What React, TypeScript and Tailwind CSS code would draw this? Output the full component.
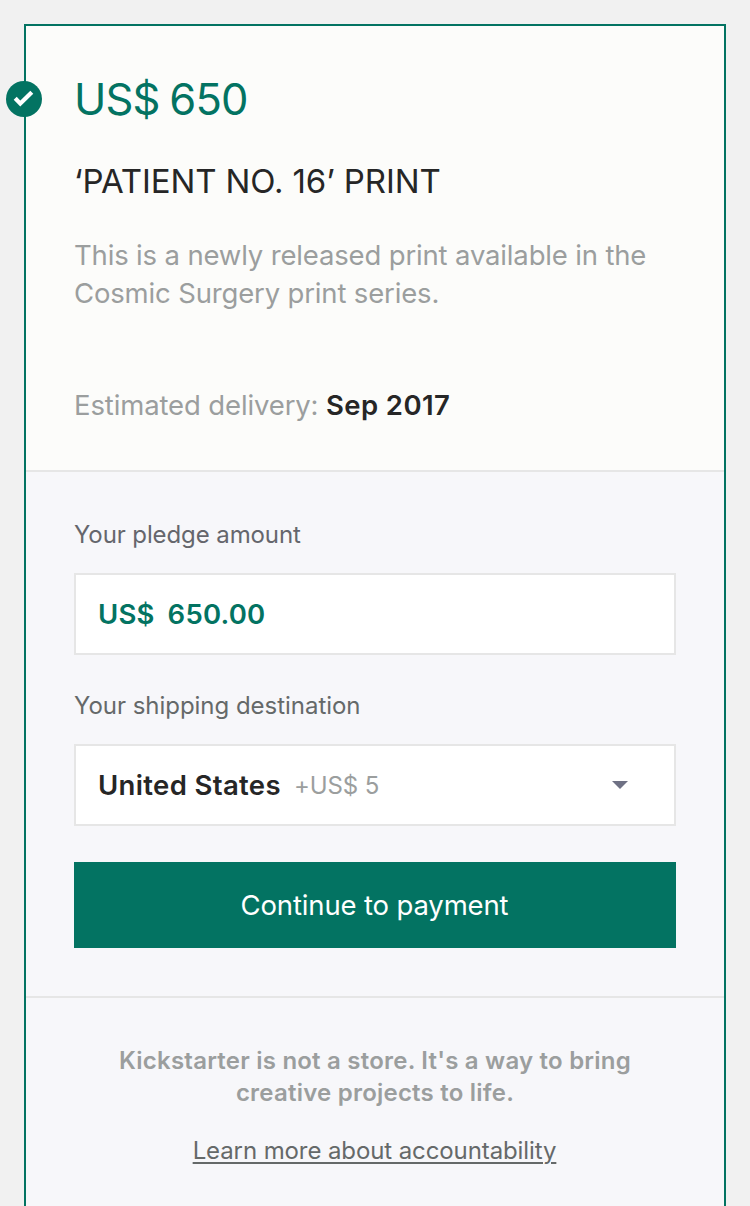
import React from "react";

const fontClass = "font-['Inter','Liberation_Sans',sans-serif]";

function Check() {
  return (
    <span className="absolute left-[-20px] top-[55px] flex h-9 w-9 items-center justify-center rounded-full bg-[#037362]">
      <svg width="36" height="36" viewBox="0 0 36 36" fill="none">
        <path d="M9.2 17.2L14.3 22.6L25.8 11.2" stroke="#fff" strokeWidth="4.2" />
      </svg>
    </span>
  );
}

export default function App() {
  return (
    <div className={`${fontClass} h-[1206px] w-[750px] overflow-hidden bg-[#f1f1f1] px-6 pt-6`}>
      <main className="relative h-[1300px] border-2 border-[#037362] bg-[#f7f7fa]">
        <Check />
        <section className="h-[446px] border-b-2 border-[#e6e6e6] bg-[#fcfcfa] px-12 pt-[45px] whitespace-nowrap">
          <h1 className="h-14 text-[43.5px] leading-[56px] tracking-[-0.9px] [word-spacing:-1.5px] text-[#037362]">US$ 650</h1>
          <h2 className="mt-[34px] h-10 text-[33px] leading-10 tracking-[-0.12px] text-[#262626]">‘PATIENT NO. 16’ PRINT</h2>
          <p className="mt-[35px] text-[27.5px] leading-[38px] tracking-[-0.16px] text-[#9b9e9e]">
            This is a newly released print available in the<br />Cosmic Surgery print series.
          </p>
          <p className="mt-[74px] text-[27.5px] leading-[38px] tracking-[-0.13px] text-[#9b9e9e]">
            Estimated delivery: <b className="font-semibold tracking-[0.4px] text-[#262626]">Sep 2017</b>
          </p>
        </section>
        <section className="h-[526px] border-b-2 border-[#e6e6e6] px-12 pt-[47px] whitespace-nowrap">
          <label className="block h-8 text-[24px] leading-8 tracking-[-0.1px] text-[#65666c]"><span>Your pledge amount</span></label>
          <div className="mt-[22px] flex h-[82px] items-center gap-[13px] border-2 border-[#e6e6e6] bg-white px-[22px] pt-0.5 text-[27.5px] font-semibold tracking-[0.2px] text-[#037362]">
            <span>US$</span><span>650.00</span>
          </div>
          <label className="mt-[35px] block h-8 text-[24px] leading-8 tracking-[-0.03px] text-[#656969]"><span>Your shipping destination</span></label>
          <div className="mt-[22px] flex h-[82px] items-center border-2 border-[#e6e6e6] bg-white pl-[22px] pr-[46px]">
            <span className="pt-px text-[27.5px] font-semibold tracking-[0.35px] text-[#262626]">United States</span>
            <span className="ml-[13px] pt-0.5 text-[24px] tracking-[-0.1px] text-[#9b9e9e]">+US$ 5</span>
            <svg className="ml-auto" width="16" height="8" viewBox="0 0 16 8"><path d="M0 0H16L8 8Z" fill="#6f7184" /></svg>
          </div>
          <button className="mt-9 block h-[86px] w-full bg-[#037362] pt-0.5 pr-px text-[27.5px] tracking-[-0.15px] text-white"><span>Continue to payment</span></button>
        </section>
        <footer className="pt-[47px] text-center whitespace-nowrap">
          <p className="text-[24px] font-semibold leading-8 tracking-[0.22px] text-[#9b9e9e]"><span>Kickstarter is not a store. It's a way to bring</span><br /><span>creative projects to life.</span></p>
          <a className="mt-[26px] mr-px inline-block text-[24px] leading-8 tracking-[-0.1px] text-[#656969] underline decoration-2 underline-offset-3">Learn more about accountability</a>
        </footer>
      </main>
    </div>
  );
}
